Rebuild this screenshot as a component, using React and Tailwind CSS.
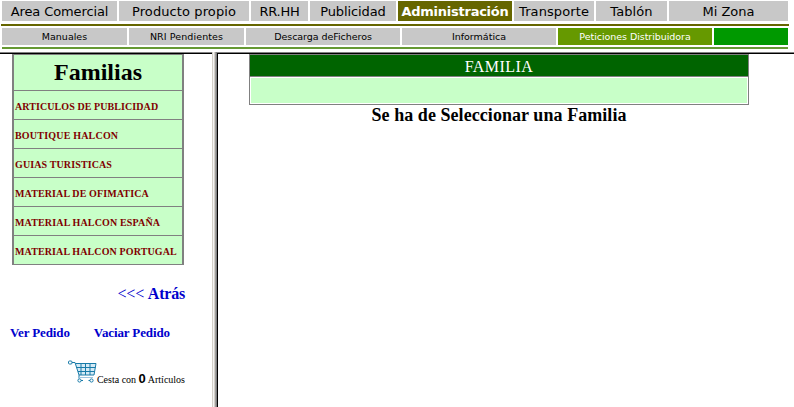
const sections = [
  { label: 'Area Comercial', cell: 'w-[115px] tracking-[-0.1px]' },
  { label: 'Producto propio', cell: 'w-[130px] tracking-[0.1px]' },
  { label: 'RR.HH', cell: 'w-[57px] tracking-[-0.3px]' },
  { label: 'Publicidad', cell: 'w-[86px] tracking-[-0.1px]' },
  { label: 'Administración', cell: 'w-[114px] tracking-[-0.25px] font-bold', active: true },
  { label: 'Transporte', cell: 'w-[80px] tracking-[0.1px]' },
  { label: 'Tablón', cell: 'w-[71px] tracking-[0.1px]' },
  { label: 'Mi Zona', cell: 'w-[119px]' },
];

const pages = [
  { label: 'Manuales', cell: 'w-[125px] bg-[#c8c8c8] text-black' },
  { label: 'NRI Pendientes', cell: 'w-[115px] tracking-[0.1px] bg-[#c8c8c8] text-black' },
  { label: 'Descarga deFicheros', cell: 'w-[154px] tracking-[-0.05px] bg-[#c8c8c8] text-black' },
  { label: 'Informática', cell: 'w-[154px] bg-[#c8c8c8] text-black' },
  { label: 'Peticiones Distribuidora', cell: 'w-[154px] tracking-[-0.05px] bg-[#669900] text-white' },
  { label: '', cell: 'w-[74px] bg-[#009900]' },
];

const families = [
  { label: 'ARTICULOS DE PUBLICIDAD', spacing: 'tracking-[0.08px]' },
  { label: 'BOUTIQUE HALCON', spacing: 'tracking-[0.2px]' },
  { label: 'GUIAS TURISTICAS', spacing: 'tracking-[0.12px]' },
  { label: 'MATERIAL DE OFIMATICA', spacing: 'tracking-[0.12px]' },
  { label: 'MATERIAL HALCON ESPAÑA', spacing: 'tracking-[0.15px]' },
  { label: 'MATERIAL HALCON PORTUGAL', spacing: 'tracking-[0.12px]' },
];

function Cart() {
  return (
    <svg className="mt-px h-[23px] w-[29px] shrink-0" viewBox="0 0 29 23" fill="none" stroke="#187ba8">
      <path d="M7 3h21l-2 12H11z" fill="#d5eaf5" stroke="none" />
      <rect x="0.5" y="1" width="3.500" height="3" rx="1" />
      <path d="M4 2.500h3l4 12.500v3.500" />
      <path d="M7.500 3.500h20.500l-2 11.500H11M8.500 7.500h19M10 11.500h16.500M13 3.500v11.500M17.500 3.500v11.500M22 3.500v11.500" />
      <path d="M11 17.500h14" stroke="#9dc4e0" />
      <circle cx="11.500" cy="20.500" r="1.600" fill="white" />
      <circle cx="23.500" cy="20.500" r="1.600" fill="white" />
      <path d="M13 20.500h2M20.500 20.500h1.500" />
    </svg>
  );
}

export default function App() {
  return (
    <div className="flex h-[407px] w-[794px] flex-col overflow-hidden bg-white font-['Liberation_Serif',serif] text-black">
      <header className="h-[52px] shrink-0 pt-px pl-[2px] font-['DejaVu_Sans',sans-serif]">
        <nav className="flex h-[20px] gap-[2px] text-[13px] leading-[22px]">
          {sections.map((s) => (
            <a key={s.label} className={`${s.cell} text-center whitespace-nowrap ${s.active ? 'bg-[#666600] text-white' : 'bg-[#c8c8c8]'}`}>
              {s.label}
            </a>
          ))}
        </nav>
        <div className="-ml-px mt-[3px] h-[2px] w-[788px] bg-[#666600]" />
        <nav className="mt-[2px] flex h-[17px] gap-[2px] text-[9.500px] leading-[17px]">
          {pages.map((p) => (
            <a key={p.label} className={`${p.cell} text-center whitespace-nowrap`}>
              {p.label}
            </a>
          ))}
        </nav>
        <div className="mt-[2px] h-[2px] w-[786px] bg-[#669933]" />
      </header>

      <div className="flex min-h-0 flex-1">
        <aside className="flex w-[212px] flex-col border-t border-[#808080]">
          <div className="h-px shrink-0 bg-black" />
          <div className="ml-[12px] w-[172px] border-2 border-t-[1px] border-r-[2px] border-b-0 border-l-[2px] border-[#808080] bg-[#c8ffc8]">
            <h1 className="h-[35px] text-center text-[24px] leading-[35px] font-bold">Familias</h1>
            {families.map((f) => (
              <div key={f.label} className={`${f.spacing} h-[29px] border-t border-[#808080] pl-px text-[10px] leading-[31px] font-bold whitespace-nowrap text-[#800000]`}>
                {f.label}
              </div>
            ))}
            <div className="h-px bg-[#808080]" />
          </div>
          <a className="mt-[19px] mr-[27px] self-end text-[16px] leading-[20px] tracking-[-0.2px] text-[#0000cc]">
            &lt;&lt;&lt; <b>Atrás</b>
          </a>
          <div className="mt-[21px] flex gap-[24px] pl-[10px] text-[13px] leading-[16px] font-bold tracking-[-0.12px] whitespace-nowrap text-[#0000cc]">
            <a>Ver Pedido</a>
            <a>Vaciar Pedido</a>
          </div>
          <div className="mt-[18px] mr-[27px] flex justify-end text-[10px] leading-[39px] whitespace-nowrap">
            <Cart />
            <span className="h-[24px]">
              Cesta con <b className="font-['Liberation_Sans',sans-serif] text-[13px]">0</b> Artículos
            </span>
          </div>
        </aside>

        <div className="flex w-[5px] shrink-0 border-x border-r-[#808080] border-l-[#d4d0c8]">
          <div className="w-px bg-[#f4f4f4]" />
          <div className="w-px bg-[#d4d0c8]" />
          <div className="w-px bg-[#a0a0a0]" />
        </div>

        <main className="flex-1 border-t border-[#808080]">
          <div className="h-full border-t border-l border-black pl-[31px]">
            <div className="h-[51px] w-[500px] border border-[#808080]">
              <h2 className="h-[22px] border-b border-[#808080] bg-[#006400] text-center text-[16px] leading-[23px] tracking-[0.45px] text-white">FAMILIA</h2>
              <div className="mx-px mt-px h-[25px] bg-[#c8ffc8]" />
            </div>
            <p className="w-[500px] text-center text-[18px] leading-[21px] font-bold tracking-[0.06px]">Se ha de Seleccionar una Familia</p>
          </div>
        </main>
      </div>
    </div>
  );
}
